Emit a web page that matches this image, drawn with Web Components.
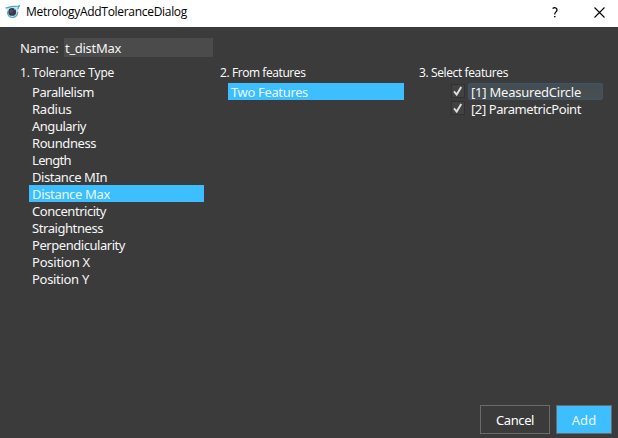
<!DOCTYPE html>
<html lang="en"><head><meta charset="utf-8"><title>MetrologyAddToleranceDialog</title>
<style>html,body{margin:0;height:100%;overflow:hidden;background:#3b3b3b}</style></head><body>
<tolerance-dialog></tolerance-dialog>
<script>
// Base class: attaches an open shadow root filled from a template.
class Base extends HTMLElement{
  constructor(){super();const t=document.createElement('template');t.innerHTML=this.constructor.markup;
    this.attachShadow({mode:'open'}).append(t.content.cloneNode(true));}
}
// Text run tracked to a given advance width.
class FitText extends Base{
  static markup=`<style>:host{display:inline-block;white-space:pre;flex:none}</style><slot></slot>`;
  connectedCallback(){
    const w=+this.getAttribute('w'),n=this.textContent.length;
    this.style.letterSpacing='0px';
    const r=this.getBoundingClientRect().width;
    this.style.letterSpacing=((w-r)/n).toFixed(3)+'px';
  }
}
class TitleBar extends Base{
  static markup=`<style>
    :host{display:flex;align-items:center;height:27px;box-sizing:border-box;background:#fff;color:#000;padding:0 13px 3px 5px;font-size:12px;line-height:16px}
    svg{display:block;flex:none}.logo{margin-right:6px}.gap{flex:1}.q{margin-right:36px}</style>
    <svg class="logo" width="15" height="14" viewBox="0 0 15 14"><path d="M.5 2.800c3 .3 4.500-1.800 7.500-1.500 2 .2 4 .5 6.300-.5-.6 1.500-1.300 2.600-1.300 5.200 0 4.500-2.500 7-5.600 7S2.300 10.800 2.200 7C2.200 5 1.600 3.800.5 2.800Z" fill="#c9e4f0"/><path d="M.5 2.800c3 .3 4.800-1.800 8-1.500 2 .3 3.500.4 5.800-.5-.8 1.100-1.300 2-1.300 3.500M2.400 6.500c0 3.700 2.100 6 4.800 6 3 0 5.300-2.200 5.600-5.600" fill="none" stroke="#54a5cb" stroke-width="1.200"/><circle cx="7.200" cy="6.900" r="3.900" fill="#2c3e50"/><circle cx="6.300" cy="6.300" r="1.800" fill="#644654"/><path d="m9.200 4.300 1.600-1" stroke="#d7eef7"/></svg>
    <fit-text w="161"><slot></slot></fit-text><span class="gap"></span>
    <svg class="q" width="6" height="11" viewBox="0 0 6 11"><path d="M.6 1.600C2.500.1 5 .5 5 2.900c0 2-2.300 2-2.300 4.600M2 9.700h1.500" fill="none" stroke="#000" stroke-width="1.300"/></svg>
    <svg width="11" height="11" viewBox="0 0 11 11"><path d="m.5.5 10 10m0-10-10 10" stroke="#000" stroke-width="1.100"/></svg>`;
}
class NameField extends Base{
  static markup=`<style>:host{display:flex;align-items:center;height:19px;color:#f4f4f4;font-size:13px;line-height:20px}
    .label{width:44px}.box{display:flex;width:149px;height:19px;background:#4b4b4b;box-sizing:border-box;padding-left:1px}</style>
    <span class="label"><slot name="label"></slot></span><span class="box"><slot></slot></span>`;
}
class FeatureColumn extends Base{
  static markup=`<style>:host{display:flex;flex-direction:column;color:#fff}
    .head{font-size:12px;line-height:18px;height:18px;padding-bottom:1px}.list{padding-left:9px;display:flex;flex-direction:column}
    :host([inset]) .head{padding-left:1px}</style>
    <div class="head"><slot name="head"></slot></div><div class="list"><slot></slot></div>`;
}
class ListRow extends Base{
  static markup=`<style>:host{display:flex;height:17px;width:175px;box-sizing:border-box;padding-left:3px;color:#f6f6f6;font-size:13px;line-height:18px}
    :host([selected]){background:#3dbeff;color:#e8f8ff}:host([wide]){width:176px}</style><slot></slot>`;
}
class CheckRow extends Base{
  static markup=`<style>:host{display:flex;height:17px;padding-left:23px;font-size:13px;line-height:18px;color:#f6f6f6}
    .check{width:14px;height:14px;box-sizing:border-box;border:1px solid #313131;background:#424242;margin:1px 3px 0 0}
    svg{display:block}.item{display:flex;width:135px;height:17px;box-sizing:border-box;border:1px solid transparent;border-radius:2px;padding-left:2px;line-height:16px}
    :host([hover]) .item{background:linear-gradient(#434d53,#4a4e50);border-color:#3b566a}</style>
    <span class="check"><svg width="12" height="12" viewBox="0 0 12 12"><path d="M2 6.300 4.700 9.600 9.200 1.900" fill="none" stroke="#dedede" stroke-width="1.900"/></svg></span><span class="item"><slot></slot></span>`;
}
class PushButton extends Base{
  static markup=`<style>:host{display:flex;width:70px;height:29px;box-sizing:border-box;border:1px solid #6b6b6b;align-items:center;justify-content:center;color:#fff;font-size:13px;line-height:18px;padding-top:1px}
    :host([primary]){width:56px;background:#3dbeff;color:#e8f8ff}</style><slot></slot>`;
}
class ToleranceDialog extends Base{
  static markup=`<style>:host{display:flex;flex-direction:column;width:618px;height:438px;background:#3b3b3b;font-family:"Noto Sans","Open Sans",sans-serif}
    name-field{margin:11px 0 0 20px}.seg{font-family:"Open Sans","Noto Sans",sans-serif}
    main{display:grid;grid-template-columns:199px 200px 199px;margin:7px 0 0 20px;flex:1}
    footer{display:flex;justify-content:flex-end;gap:6px;padding:0 6px 4px 0}</style>
    <title-bar class="seg">MetrologyAddToleranceDialog</title-bar>
    <name-field><fit-text slot="label" w="38.500">Name:</fit-text><fit-text w="56">t_distMax</fit-text></name-field>
    <main>
      <feature-column><fit-text class="seg" slot="head" w="94">1. Tolerance Type</fit-text>
        <list-row><fit-text w="62">Parallelism</fit-text></list-row>
        <list-row><fit-text w="39.500">Radius</fit-text></list-row>
        <list-row><fit-text w="54">Angulariy</fit-text></list-row>
        <list-row><fit-text w="64">Roundness</fit-text></list-row>
        <list-row><fit-text w="39">Length</fit-text></list-row>
        <list-row><fit-text w="75">Distance MIn</fit-text></list-row>
        <list-row selected><fit-text w="78">Distance Max</fit-text></list-row>
        <list-row><fit-text w="74">Concentricity</fit-text></list-row>
        <list-row><fit-text w="71">Straightness</fit-text></list-row>
        <list-row><fit-text w="93">Perpendicularity</fit-text></list-row>
        <list-row><fit-text w="58">Position X</fit-text></list-row>
        <list-row><fit-text w="57">Position Y</fit-text></list-row>
      </feature-column>
      <feature-column inset><fit-text class="seg" slot="head" w="85.500">2. From features</fit-text>
        <list-row selected wide><fit-text w="77">Two Features</fit-text></list-row></feature-column>
      <feature-column><fit-text class="seg" slot="head" w="89">3. Select features</fit-text>
        <check-row hover><fit-text w="110">[1] MeasuredCircle</fit-text></check-row>
        <check-row><fit-text w="110">[2] ParametricPoint</fit-text></check-row></feature-column>
    </main>
    <footer><push-button><fit-text w="38">Cancel</fit-text></push-button><push-button primary><fit-text w="24.500">Add</fit-text></push-button></footer>`;
}
customElements.define('name-field',NameField);
customElements.define('feature-column',FeatureColumn);
customElements.define('list-row',ListRow);
customElements.define('check-row',CheckRow);
customElements.define('push-button',PushButton);
customElements.define('title-bar',TitleBar);
customElements.define('tolerance-dialog',ToleranceDialog);
customElements.define('fit-text',FitText);
// The title's text arrives through a slot, so its tracking uses the host's own text.
const bar=document.querySelector('tolerance-dialog').shadowRoot.querySelector('title-bar');
const run=bar.shadowRoot.querySelector('fit-text');
run.style.letterSpacing='0px';
run.style.letterSpacing=((161-run.getBoundingClientRect().width)/bar.textContent.length)+'px';
</script></body></html>
